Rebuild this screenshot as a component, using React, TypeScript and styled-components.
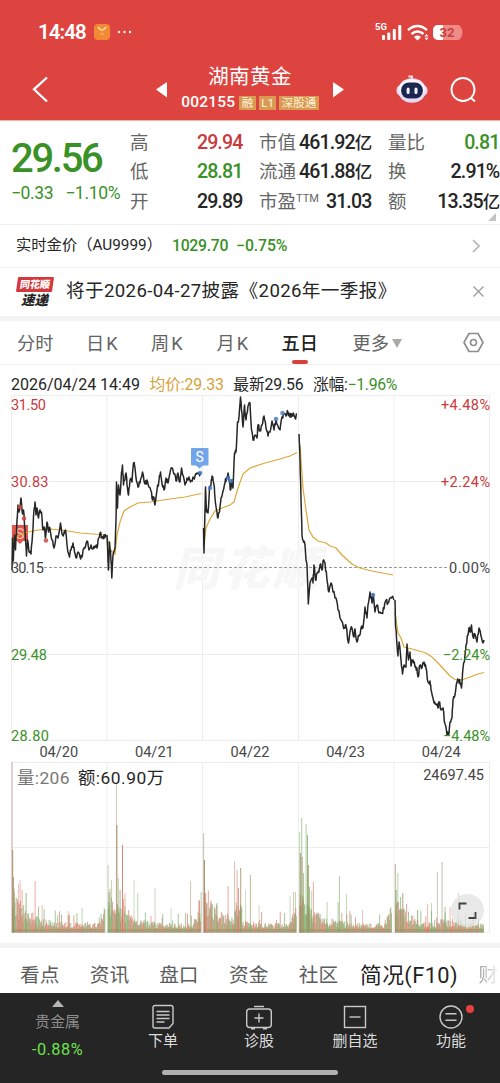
import React from "react";
import styled, { createGlobalStyle } from "styled-components";

const RED = "#c9393c";
const GREEN = "#3a9128";

const Global = createGlobalStyle`
  * { box-sizing: border-box; }
  body {
    margin: 0;
    background: #fff;
    color: #262626;
    font-family: Roboto, "Noto Sans CJK SC", sans-serif;
    overflow: hidden;
  }
  svg { display: block; flex: none; }
`;

const Screen = styled.div`
  width: 500px;
  height: 1083px;
  display: flex;
  flex-direction: column;
  overflow: hidden;
  white-space: nowrap;
`;

const Txt = styled.span<{ size: number; color?: string; weight?: number; gap?: number }>`
  display: block;
  font-size: ${(p) => p.size}px;
  line-height: ${(p) => Math.round(p.size * 1.25)}px;
  color: ${(p) => p.color ?? "inherit"};
  font-weight: ${(p) => p.weight ?? 400};
  letter-spacing: ${(p) => p.gap ?? 0}px;
`;

/* Header */
const Header = styled.header`
  height: 121px;
  flex: none;
  background: #dd4440;
  border-bottom: 1px solid #f2b3a8;
  color: #fff;
`;

const StatusBar = styled.div`
  height: 60px;
  display: flex;
  align-items: center;
  justify-content: space-between;
  padding: 4px 36px 0 38px;
`;

const StatusGroup = styled.div`
  display: flex;
  align-items: center;
`;

const NavBar = styled.div`
  height: 60px;
  display: grid;
  grid-template-columns: 156px 188px 51px 55px 1fr;
`;

const NavSide = styled.div`
  padding: 16px 0 0 32px;
`;

const NavIcon = styled.div<{ top: number }>`
  padding-top: ${(p) => p.top}px;
`;

const TitleBlock = styled.div`
  display: flex;
  justify-content: space-between;
  padding-top: 3px;
`;

const Stepper = styled.div`
  padding-top: 19px;
`;

const TitleText = styled.div`
  display: flex;
  flex-direction: column;
  align-items: center;
  padding-top: 1px;
`;

const CodeRow = styled.div`
  display: flex;
  align-items: center;
  gap: 3px;
  margin-top: 3px;
`;

const Tag = styled.span`
  height: 14px;
  padding: 0 2.5px;
  background: #d99a54;
  color: #fff3dc;
  font-size: 11.5px;
  line-height: 14px;
`;

/* Quote */
const Quote = styled.section`
  height: 104px;
  flex: none;
  display: grid;
  grid-template-columns: 130px 112px 17px 112px 17px 111px;
  border-bottom: 1px solid #eee;
`;

const PriceColumn = styled.div`
  padding: 13px 0 0 11px;
`;

const ChangeRow = styled.div`
  display: flex;
  gap: 12px;
  margin-top: -2px;
`;

const StatColumn = styled.div`
  position: relative;
  padding-top: 7px;
`;

const Stat = styled.div`
  height: 29.5px;
  display: flex;
  align-items: center;
  justify-content: space-between;
`;

const Label = styled.span`
  font-size: 18.5px;
  line-height: 28px;
  color: #666;
  sup {
    font-size: 11px;
    line-height: 0;
    vertical-align: 6px;
  }
`;

const Value = styled.span<{ color?: string }>`
  font-size: 19.6px;
  line-height: 28px;
  font-weight: 500;
  letter-spacing: -0.9px;
  margin-right: -0.4px;
  color: ${(p) => p.color ?? "#262626"};
  small { font-size: 17.5px; }
`;

const Corner = styled.i`
  position: absolute;
  right: 3px;
  bottom: 3px;
  border-left: 8px solid transparent;
  border-bottom: 8px solid #c4c4c4;
`;

/* Info rows */
const GoldRow = styled.section`
  height: 43px;
  flex: none;
  display: flex;
  align-items: center;
  padding: 0 20px 2px 16px;
  box-shadow: inset 0 -1px #f1f1f1;
`;

const GoldValues = styled.div`
  display: flex;
  gap: 8px;
  margin-left: 10px;
`;

const Spacer = styled.div`
  flex: 1;
`;

const NoticeRow = styled.section`
  height: 48px;
  flex: none;
  display: flex;
  align-items: center;
  padding: 0 16px 1px;
`;

const Badge = styled.div`
  width: 50px;
  display: flex;
  flex-direction: column;
  padding-top: 1px;
`;

const BadgeTop = styled.div`
  width: 36px;
  height: 15px;
  margin-left: 1px;
  transform: skewX(-8deg);
  border-radius: 1px;
  background: #d2383c;
  color: #fff;
  font-size: 10px;
  font-weight: 900;
  line-height: 15px;
  text-align: center;
`;

const BadgeBottom = styled.div`
  padding-left: 5px;
  font-size: 13.5px;
  font-weight: 900;
  font-style: italic;
  line-height: 16px;
`;

const Band = styled.div`
  height: 5px;
  flex: none;
  background: #f4f4f4;
`;

/* Period tabs */
const Periods = styled.nav`
  height: 44px;
  flex: none;
  display: grid;
  grid-template-columns: 69px 65px 65.5px 65px 71px 110.5px 1fr;
  padding-left: 17px;
  border-bottom: 1px solid #f0f0f0;
`;

const Period = styled.div<{ active?: boolean; latin?: boolean }>`
  display: flex;
  flex-direction: column;
  width: max-content;
  align-items: center;
  padding-top: 9px;
  font-size: 18.2px;
  line-height: 27px;
  letter-spacing: ${(p) => (p.latin ? 2 : 0)}px;
  font-weight: ${(p) => (p.active ? 500 : 400)};
  color: ${(p) => (p.active ? "#222" : "#636363")};
  &::after {
    content: "";
    width: 16px;
    height: 4px;
    margin-top: 3px;
    border-radius: 2px;
    background: ${(p) => (p.active ? "#d8403e" : "transparent")};
  }
`;

const More = styled.span`
  display: flex;
  align-items: center;
  gap: 3px;
`;

const Legend = styled.div`
  height: 29px;
  flex: none;
  display: flex;
  align-items: center;
  gap: 9.5px;
  padding: 11px 0 0 11px;
`;

const Dates = styled.div`
  height: 20px;
  flex: none;
  display: grid;
  grid-template-columns: repeat(5, 95.6px);
  padding-left: 11px;
  text-align: center;
  font-size: 14.6px;
  line-height: 20px;
  color: #484848;
`;

const VolumePanel = styled.div`
  position: relative;
  height: 181px;
  flex: none;
`;

const VolumeText = styled.div`
  position: absolute;
  top: 5px;
  left: 17px;
  right: 16px;
  display: flex;
  gap: 8px;
`;

const Expand = styled.div`
  position: absolute;
  left: 451px;
  top: 132px;
  width: 33px;
  height: 33px;
  border-radius: 50%;
  background: rgba(228, 228, 228, 0.82);
`;

/* Bottom */
const Sections = styled.nav`
  height: 45px;
  flex: none;
  display: grid;
  grid-template-columns: 69.8px 69.4px 69.8px 69.8px 61.2px 118.5px 22px;
  align-items: center;
  padding: 9px 0 0 20px;
  overflow: hidden;
`;

const Fade = styled.div`
  overflow: hidden;
  mask-image: linear-gradient(90deg, #000, transparent);
`;

const BottomBar = styled.footer`
  height: 90px;
  flex: none;
  background: #252525;
  color: #dcdcdc;
`;

const Actions = styled.div`
  height: 77px;
  display: grid;
  grid-template-columns: 115px repeat(4, 96px);
`;

const Action = styled.div<{ top: number }>`
  position: relative;
  display: flex;
  flex-direction: column;
  align-items: center;
  padding-top: ${(p) => p.top}px;
`;

const Dot = styled.i`
  position: absolute;
  left: 63px;
  top: 12px;
  width: 8px;
  height: 8px;
  border-radius: 50%;
  background: #e8403c;
`;

const HomeBar = styled.div`
  width: 176px;
  height: 5px;
  margin: 0 auto;
  border-radius: 3px;
  background: #b1b1b1;
`;

type Pt = [number, number];

const parse = (s: string): Pt[] => s.split(" ").map((p) => p.split(",").map(Number) as Pt);

const priceDays = [
  "12,570 12.5,538 13.3,561 14.5,535 15.5,550 17,520 18,505 19,512 20,506 21,498 22.5,514 23.5,510 25,530 26.5,556 27.5,540 29,552 31,554 32.5,535 34,510 35,502 36,515 37,508 38.5,518 40,510 41.5,512 43,530 44.5,528 45.5,538 47,522 48.5,532 50,529 52,540 54,548 56,536 58,538 60.5,523 62,534 64,533 65.5,530 67,545 69.5,557 71,550 73,543 74.5,552 76.5,558 78,552 80,557 82,557 83,550 85,548 87,541 89,550 91,545 93,549 95,546 97,548 98,540 100,533 102,538 104,535 106,537",
  "107,535 108,562 108.5,570 109.5,542 110.5,550 111.8,578 113,555 115,548 116,520 116.5,482 117.5,508 118.5,485 120,495 121.5,472 122.5,465 123.5,485 125,480 126,473 127,485 128.5,495 130,480 132,482 133.5,463 134.5,465 136,478 138,487 140,483 142.5,472 145,484 147,480 149,487 151,491 152.5,500 153.5,497 155,505 157,490 159,480 160.5,472 162,484 164,490 166,478 168,483 170,473 172,468 174,474 176,481 178,473 180,482 181.5,468 183,475 185,485 187,478 189,477 190.5,482 193,477 195,476 197,473 199,473 201,473",
  "203.5,528 204,553 205,510 205.5,487 206.5,512 208,513 209.5,488 211,485 212,476 214,485 215,498 216.5,510 218,518 219.5,512 221,498 223,491 225,483 226.5,478 228,473 229.5,483 230.5,490 232,480 233,488 234.5,453 236,452 237.5,422 239,417 240.5,397 241.5,410 243,427 244.5,405 246,420 248,406 250,403 251.5,430 253,440 255,435 257,438 258,425 260,430 262,425 264,416 266,428 268,436 270,432 272,421 274,430 276,420 278,426 280,430 282,417 284,414 286,416 288,412 290,417 292,414 294,415 295,418 297,414",
  "299,434 300,460 301,500 302,535 303,540 305,545 306,560 307,565 308.3,604 310,583 312,578 313,583 314,565 315.5,580 317,573 319,572 320,565 322,570 323,561 325,563 327,580 329,592 331,583 333,592 336,598 338,610 341,620 343,625 345,628 346,626 348.5,643 350,632 352,628 354,637 355,629 357,642 359,636 361,628 363,628 365,607 367,618 368,605 370,592 372,603 373,594 375,612 377,605 379,613 382,613 384,609 386,600 388,603 390,598 392,597 394,600",
  "395,600 395.5,625 396.5,638 398,656 399,642 401,660 402.5,674 404,665 406,667 407,644 408.5,660 410,652 411,666 413,660 415,667 417,668 418,677 420,665 422,668 424,662 426,668 428,682 430,681 431,690 433,698 434,703 436,704 438,708 439,702 441,710 443,708 445,724 447,735 449,734 450,722 452,718 453,700 455,695 457,682 459,680 460,683 461.5,688 463,668 465,655 466,645 468,635 469,628 470,632 471.5,625 473,637 475,634 477,642 479,628 481,636 483,643 484,640",
].map(parse);

const averageDays = [
  "12,541 16,537 24,533 38,530 50,529 62,530 80,533 106,535",
  "107,536 110,550 115,554 117,535 120,522 124,511 130,507 138,503 150,502 170,499 185,497 201,493.5",
  "204,545 206,528 210,519 215,511 222,508 230,505 234,502 238,488 243,474 250,468 265,463 280,459 290,456 297,452.5",
  "300,445 301,460 303,488 306,510 309,530 313,537 318,541 326,543 330,546 336,548 342,555 352,564 360,568 372,571 393,575",
  "395,612 398,633 401,638 404,647 412,649 426,653 432,657 440,665 450,676 455,679.5 462,680 470,677 478,674 484,672.5",
].map(parse);

const random = (seed: number) => () => {
  seed = (seed * 1664525 + 1013904223) % 4294967296;
  return seed / 4294967296;
};

const toPath = (pts: Pt[]) => pts.map(([x, y], i) => `${i ? "L" : "M"}${x.toFixed(1)} ${y.toFixed(1)}`).join("");

// Adds intermediate ticks between neighbouring quotes
const withTicks = (pts: Pt[], seed: number): Pt[] => {
  const rnd = random(seed);
  return pts.flatMap((p, i) => {
    const next = pts[i + 1];
    if (!next) return [p];
    return [0, 0.33, 0.66].map((t): Pt => [
      p[0] + (next[0] - p[0]) * t,
      p[1] + (next[1] - p[1]) * t + (t ? (rnd() - 0.5) * 5.5 : 0),
    ]);
  });
};

const COLUMNS = [11.5, 107, 202.5, 298.5, 394, 489.5];

const axis: [number, string, string, string, number, number][] = [
  [404.5, "31.50", "+4.48%", RED, 35, 49],
  [481.5, "30.83", "+2.24%", RED, 37.5, 49],
  [568, "30.15", "0.00%", "#444", 33, 41],
  [654.5, "29.48", "−2.24%", GREEN, 36, 47],
  [735.5, "28.80", "−4.48%", GREEN, 38, 47],
];

function PriceChart() {
  return (
    <svg width="500" height="348" viewBox="0 394 500 348">
      <g stroke="#ededed" fill="none">
        {COLUMNS.map((x) => (
          <path key={x} d={`M${x} 395.5V740.5`} />
        ))}
        {[395.5, 481.5, 654.5, 740.5].map((y) => (
          <path key={y} d={`M11 ${y}H490`} />
        ))}
      </g>
      <text x="173" y="585" fontSize="46" fontWeight="900" fontStyle="italic" fill="#f7f7f7" textLength="146">
        同花顺
      </text>
      <path d="M44 567.5H449" stroke="#999" strokeDasharray="3 2" />
      <g>
        <path d="M12 525h16v16h-5l-3 3-3-3h-5z" fill="#e0564f" />
        <text x="20" y="539" fontSize="15" textAnchor="middle" fill="#f7c4ae">S</text>
      </g>
      {averageDays.map((d, i) => (
        <path key={i} d={toPath(d)} fill="none" stroke="#dda63a" strokeWidth="1.2" />
      ))}
      {priceDays.map((d, i) => (
        <path
          key={i}
          d={toPath(withTicks(d, i + 7))}
          fill="none"
          stroke="#262626"
          strokeWidth="1.5"
          strokeLinejoin="round"
        />
      ))}
      {[[20, 507], [24, 518.5], [46, 540.5]].map(([x, y]) => (
        <circle key={x} cx={x} cy={y} r="2.3" fill="#cf4a44" opacity="0.85" />
      ))}
      {[[200, 473], [210, 488], [228, 478], [231, 481], [276, 419], [282.5, 413], [373, 595]].map(([x, y]) => (
        <circle key={x} cx={x} cy={y} r="2.3" fill="#4779c4" opacity="0.8" />
      ))}
      <path d="M192 448h15.500a1 1 0 0 1 1 1v15.500a1 1 0 0 1-1 1H203l-3.500 3-3.500-3h-4a1 1 0 0 1-1-1V449a1 1 0 0 1 1-1z" fill="#73a5ea" />
      <text x="199.700" y="462" fontSize="14" textAnchor="middle" fill="#fff">S</text>
      {axis.map(([y, price, pct, color, w1, w2]) => (
        <g key={price} fontSize="14.5" fill={color}>
          <text x="11" y={y + 5} textLength={w1}>{price}</text>
          <text x={490 - w2} y={y + 5} textLength={w2}>{pct}</text>
        </g>
      ))}
    </svg>
  );
}

const UP = "#dc7868";
const DOWN = "#78ac66";
const BOTH = "#a28a62";

// [x, top, colour, opacity]
const spikes: [number, number, string, number][] = [
  [12, 762, "#c98f86", 0.7], [12.6, 850, BOTH, 0.9], [13.3, 877, BOTH, 0.8], [14, 888, DOWN, 0.6],
  [18.5, 884, UP, 0.5], [20, 880, UP, 0.5], [22, 890, UP, 0.6], [26, 893, DOWN, 0.8], [35, 881, UP, 0.6], [42, 905, UP, 0.5],
  [82, 908, DOWN, 0.5], [68, 911, DOWN, 0.5],
  [108, 865, DOWN, 0.5], [109, 892, DOWN, 0.8], [111.5, 880, DOWN, 0.5], [116.3, 783, BOTH, 0.5], [116.8, 825, BOTH, 0.9],
  [118.3, 878, DOWN, 0.5], [122.4, 845, UP, 0.9], [120, 890, BOTH, 0.7], [125, 893, UP, 0.5], [134, 880, DOWN, 0.4], [137.6, 893, DOWN, 0.5],
  [155, 888, BOTH, 0.4], [190.5, 881, BOTH, 0.5], [171, 908, DOWN, 0.4], [199, 900, UP, 0.8], [201, 892, DOWN, 0.6],
  [203.5, 833, "#b5a58c", 0.7], [204.4, 860, BOTH, 0.9], [205.5, 893, UP, 0.8], [211, 900, UP, 0.5], [217, 903, DOWN, 0.7],
  [228, 886, UP, 0.6], [234.5, 861, BOTH, 0.5], [237, 870, UP, 0.6], [238.3, 888, UP, 0.8], [240.6, 868, BOTH, 0.8],
  [245.500, 890, DOWN, 0.4], [250.3, 875, BOTH, 0.6], [259, 905, DOWN, 0.4], [290, 896, DOWN, 0.4], [293.5, 892, UP, 0.5], [295.3, 892, DOWN, 0.5],
  [299.5, 832, DOWN, 0.5], [300.3, 853, BOTH, 0.8], [301.6, 818, DOWN, 0.6], [302, 857, BOTH, 0.8], [303.5, 873, DOWN, 0.7], [306, 824, DOWN, 0.6],
  [307.4, 835, DOWN, 0.8], [308.2, 865, BOTH, 0.9], [309.5, 887, DOWN, 0.8], [313.3, 882, UP, 0.6], [311.6, 891, DOWN, 0.5],
  [327, 902, DOWN, 0.5], [339.3, 876, DOWN, 0.6], [338, 902, DOWN, 0.6], [346.3, 894, DOWN, 0.5], [362.5, 910, UP, 0.5],
  [395.2, 864, BOTH, 0.7], [396, 890, DOWN, 0.9], [397.7, 873, DOWN, 0.5], [400.5, 897, DOWN, 0.7], [402.7, 893, BOTH, 0.8],
  [417.5, 910, DOWN, 0.8], [427.5, 904, UP, 0.5], [431.5, 903, DOWN, 0.5], [437.3, 872, "#a9a488", 0.6], [442, 862, "#a9a488", 0.7], [458.5, 893, UP, 0.4],
  [445, 907, DOWN, 0.7], [450, 907, UP, 0.5],
];

const dayRanges = [[12, 104.5], [107.7, 200.700], [203.5, 296], [299.2, 391.500], [395, 483.5]];

function VolumeChart() {
  const rnd = random(42);
  const bars: [number, number, string][] = [];
  dayRanges.forEach(([from, to], day) => {
    for (let x = from; x < to; x += 0.62) {
      const t = x - from;
      const left = to - x;
      let base = 8 + 30 * Math.exp(-t / (day === 4 ? 10 : 16));
      if (left < 9 && day < 4) base += (9 - left) * 1.8;
      if (day === 2 && t > 31 && t < 38) base += 16;
      if (day === 4 && t > 42 && t < 66) base += 4;
      const h = base * (0.45 + rnd() * 0.7) + (rnd() > 0.9 ? rnd() * 15 : 0);
      bars.push([x, h, rnd() > (day > 2 ? 0.55 : 0.5) ? DOWN : UP]);
    }
  });
  return (
    <svg width="500" height="181" viewBox="0 762 500 181">
      <g stroke="#ededed" fill="none">
        {COLUMNS.map((x) => (
          <path key={x} d={`M${x} 762V932.5`} />
        ))}
        {[762.5, 847.5, 932.5].map((y) => (
          <path key={y} d={`M11 ${y}H490`} />
        ))}
      </g>
      {bars.map(([x, h, c], i) => (
        <rect key={i} x={x} y={932.5 - h} width="0.95" height={h} fill={c} opacity="0.7" />
      ))}
      {dayRanges.map(([a, b]) => (
        <rect key={a} x={a} y="929" width={b - a} height="3.5" fill={BOTH} opacity="0.5" />
      ))}
      {spikes.map(([x, y, c, o]) => (
        <rect key={x} x={x - 0.4} y={y} width="1" height={932.5 - y} fill={c} opacity={o} />
      ))}
    </svg>
  );
}

function StatusIcons() {
  return (
    <svg width="90" height="24" viewBox="374 19 90 24" fill="#fff">
      <text x="375" y="29" fontSize="9.500" fontWeight="700">5G</text>
      <rect x="382" y="34" width="3" height="5" rx="1" />
      <rect x="387.300" y="31.500" width="3" height="7.500" rx="1" />
      <rect x="392.800" y="28" width="3" height="11" rx="1" />
      <rect x="398.300" y="24" width="3" height="15" rx="1" />
      <g fill="none" stroke="#fff" strokeWidth="2.400">
        <path d="M408 29.200Q417.500 21 427 29.200" />
        <path d="M411.500 33Q417.500 27.800 423.500 33" />
      </g>
      <path d="M414 36q3.500-2.800 7 0l-3.500 3.500z" />
      <path d="M424.500 35.500l2-2.500 2 2.500zM424.500 36.800l2 2.500 2-2.500z" />
      <path d="M438 24h20a3 3 0 0 1 2.500 1.500q4 6 0 12A3 3 0 0 1 458 39h-20a5 5 0 0 1-5-5v-5a5 5 0 0 1 5-5z" fill="#f08a86" />
      <path d="M438 24h5v15h-5a5 5 0 0 1-5-5v-5a5 5 0 0 1 5-5z" fill="#fff" />
      <text x="439.500" y="36.200" fontSize="13" fontWeight="700" fill="#c53f42" textLength="15">32</text>
    </svg>
  );
}

function Robot() {
  return (
    <svg width="34" height="32" viewBox="395 72 34 32">
      <path d="M412 80v-3.500h-3.500" stroke="#f4e4ea" strokeWidth="1.800" fill="none" />
      <rect x="396.500" y="85" width="31" height="11" rx="5" fill="#e9dcf5" />
      <ellipse cx="412" cy="90.500" rx="14" ry="12.200" fill="#e6d9f3" />
      <ellipse cx="412" cy="89" rx="13" ry="10" fill="#faf6ff" />
      <rect x="401" y="82.500" width="22" height="16" rx="8" fill="#1b2750" />
      <rect x="406.600" y="87.500" width="3" height="6.500" rx="1.500" fill="#f2f5ff" />
      <rect x="414.500" y="87.500" width="3" height="6.500" rx="1.500" fill="#f2f5ff" />
    </svg>
  );
}

const orderIcon = (
  <>
    <path d="M4 1.500h16a2 2 0 0 1 2 2v16l-4 4.500H4a2 2 0 0 1-2-2V3.500a2 2 0 0 1 2-2z" />
    <path d="M5.500 7.500h13M5.500 11h13M5.500 14.500h13M5.500 18h8" />
  </>
);
const diagnoseIcon = (
  <>
    <rect x="-.3" y="5" width="24.600" height="18.500" rx="3" />
    <path d="M7 2.500h10M4 24.700h4M16 24.700h4M12 9.500v9M7.500 14h9" />
  </>
);
const removeIcon = (
  <>
    <rect x="1.500" y="2.500" width="21" height="21" />
    <path d="M6.500 13h11" />
  </>
);
const menuIcon = (
  <>
    <circle cx="12" cy="13" r="11" />
    <path d="M6.500 9.800h11M6.500 16.200h11" />
  </>
);

const actions = [
  { label: "下单", icon: orderIcon },
  { label: "诊股", icon: diagnoseIcon },
  { label: "删自选", icon: removeIcon },
  { label: "功能", icon: menuIcon, dot: true },
];

export default function App() {
  return (
    <Screen>
      <Global />
      <Header>
        <StatusBar>
          <StatusGroup>
            <Txt size={20.5} weight={600} gap={-0.9}>14:48</Txt>
            <svg width="40" height="18" viewBox="0 0 40 18" style={{ marginLeft: 7 }}>
              <rect x="1" y="1" width="16" height="16" rx="4" fill="#f28a35" />
              <path d="M5 4q4 6 8 0" stroke="#ffe2b0" strokeWidth="1.500" fill="none" />
              <path d="M7 11h4" stroke="#f9b968" />
              <g fill="#fff">
                <circle cx="26" cy="9" r="1.200" />
                <circle cx="31.500" cy="9" r="1.200" />
                <circle cx="37" cy="9" r="1.200" />
              </g>
            </svg>
          </StatusGroup>
          <StatusIcons />
        </StatusBar>
        <NavBar>
          <NavSide>
            <svg width="17" height="27" viewBox="0 0 17 27" fill="none" stroke="#fff" strokeWidth="2.300">
              <path d="M15 1.500L2 13.300L15 25.500" />
            </svg>
          </NavSide>
          <TitleBlock>
            <Stepper>
              <svg width="11" height="16" fill="#fff"><path d="M0 7.500L11 0v15.500z" /></svg>
            </Stepper>
            <TitleText>
              <Txt size={20.5} gap={0.4}>湖南黄金</Txt>
              <CodeRow>
                <Txt size={15.5} weight={500} gap={0.2} style={{ marginRight: 1 }}>002155</Txt>
                <Tag>融</Tag>
                <Tag>L1</Tag>
                <Tag>深股通</Tag>
              </CodeRow>
            </TitleText>
            <Stepper>
              <svg width="11" height="16" fill="#fff"><path d="M11 7.500L0 0v15.500z" /></svg>
            </Stepper>
          </TitleBlock>
          <div />
          <NavIcon top={12}><Robot /></NavIcon>
          <NavIcon top={16}>
            <svg width="27" height="27" viewBox="0 0 27 27" fill="none" stroke="#fff" strokeWidth="1.900">
              <circle cx="13" cy="13.500" r="11.500" />
              <path d="M20.500 21.500l4.500 4" />
            </svg>
          </NavIcon>
        </NavBar>
      </Header>

      <Quote>
        <PriceColumn>
          <Txt size={40} weight={500} color={GREEN} gap={-2.3}>29.56</Txt>
          <ChangeRow>
            <Txt size={17.5} color={GREEN} gap={-0.4}>−0.33</Txt>
            <Txt size={17.5} color={GREEN} gap={-0.3}>−1.10%</Txt>
          </ChangeRow>
        </PriceColumn>
        <StatColumn>
          <Stat><Label>高</Label><Value color={RED}>29.94</Value></Stat>
          <Stat><Label>低</Label><Value color={GREEN}>28.81</Value></Stat>
          <Stat><Label>开</Label><Value>29.89</Value></Stat>
        </StatColumn>
        <div />
        <StatColumn>
          <Stat><Label>市值</Label><Value>461.92<small>亿</small></Value></Stat>
          <Stat><Label>流通</Label><Value>461.88<small>亿</small></Value></Stat>
          <Stat><Label>市盈<sup>TTM</sup></Label><Value>31.03</Value></Stat>
        </StatColumn>
        <div />
        <StatColumn>
          <Stat><Label>量比</Label><Value color={GREEN}>0.81</Value></Stat>
          <Stat><Label>换</Label><Value>2.91%</Value></Stat>
          <Stat><Label>额</Label><Value>13.35<small>亿</small></Value></Stat>
          <Corner />
        </StatColumn>
      </Quote>

      <GoldRow>
        <Txt size={15.3}>实时金价（AU9999）</Txt>
        <GoldValues>
          <Txt size={15.8} weight={500} color={GREEN} gap={-0.3}>1029.70</Txt>
          <Txt size={15.8} weight={500} color={GREEN} gap={-0.1}>−0.75%</Txt>
        </GoldValues>
        <Spacer />
        <svg width="8" height="14" fill="none" stroke="#b5b5b5" strokeWidth="1.700"><path d="M1 1l6 6-6 6" /></svg>
      </GoldRow>

      <NoticeRow>
        <Badge>
          <BadgeTop>同花顺</BadgeTop>
          <BadgeBottom>速递</BadgeBottom>
        </Badge>
        <Txt size={18.6} gap={0.38}>将于2026-04-27披露《2026年一季报》</Txt>
        <Spacer />
        <svg width="11" height="11" fill="none" stroke="#999" strokeWidth="1.200"><path d="M.5 .5l10 10M10.500 .5l-10 10" /></svg>
      </NoticeRow>
      <Band />

      <Periods>
        <Period>分时</Period>
        <Period latin>日K</Period>
        <Period latin>周K</Period>
        <Period latin>月K</Period>
        <Period active>五日</Period>
        <Period>
          <More>
            更多
            <svg width="10" height="9" fill="#aaa"><path d="M0 0h10L5 9z" /></svg>
          </More>
        </Period>
        <NavIcon top={11}>
          <svg width="21" height="21" viewBox="0 0 21 21" fill="none" stroke="#8c8c8c" strokeWidth="1.600">
            <path d="M6 1.500h9l5 9-5 9H6l-5-9z" strokeLinejoin="round" />
            <circle cx="10.500" cy="10.500" r="3" />
          </svg>
        </NavIcon>
      </Periods>

      <Legend>
        <Txt size={16}>2026/04/24 14:49</Txt>
        <Txt size={15.8} color="#d9a13a" gap={-0.1}>均价:29.33</Txt>
        <Txt size={15.8} gap={-0.15}>最新29.56</Txt>
        <Txt size={15.8} gap={-0.3}>涨幅:<span style={{ color: GREEN }}>−1.96%</span></Txt>
      </Legend>

      <PriceChart />
      <Dates>
        <span>04/20</span>
        <span>04/21</span>
        <span>04/22</span>
        <span>04/23</span>
        <span>04/24</span>
      </Dates>
      <VolumePanel>
        <VolumeChart />
        <VolumeText>
          <Txt size={17.4} color="#777" gap={0.4}>量:206</Txt>
          <Txt size={17.4} gap={0.5}>额:60.90万</Txt>
          <Spacer />
          <Txt size={14.5} color="#444">24697.45</Txt>
        </VolumeText>
        <Expand>
          <svg width="33" height="33" viewBox="0 0 33 33" fill="none" stroke="#444" strokeWidth="1.800">
            <path d="M8.500 15.500V9.500h7M24.500 18v6h-7" />
          </svg>
        </Expand>
      </VolumePanel>
      <Band />

      <Sections>
        <Txt size={19.7} color="#5c5c5c">看点</Txt>
        <Txt size={19.7} color="#5c5c5c">资讯</Txt>
        <Txt size={19.7} color="#5c5c5c">盘口</Txt>
        <Txt size={19.7} color="#5c5c5c">资金</Txt>
        <Txt size={19.7} color="#5c5c5c">社区</Txt>
        <Txt size={21.8} color="#222" gap={0.4}>简况(F10)</Txt>
        <Fade><Txt size={19.7} color="#999">财</Txt></Fade>
      </Sections>

      <BottomBar>
        <Actions>
          <Action top={7}>
            <svg width="12" height="7" fill="#b5b5b5"><path d="M6 0l6 7H0z" /></svg>
            <Txt size={15} color="#8d8d8d" style={{ marginTop: 6 }}>贵金属</Txt>
            <Txt size={16.3} color="#6fe04e" gap={0.5} style={{ marginTop: 8 }}>-0.88%</Txt>
          </Action>
          {actions.map((a) => (
            <Action key={a.label} top={11}>
              <svg width="26" height="26" viewBox="-1 0 26 26" fill="none" stroke="#c9c9c9" strokeWidth="1.400">
                {a.icon}
              </svg>
              <Txt size={15} style={{ marginTop: 2 }}>{a.label}</Txt>
              {a.dot && <Dot />}
            </Action>
          ))}
        </Actions>
        <HomeBar />
      </BottomBar>
    </Screen>
  );
}
